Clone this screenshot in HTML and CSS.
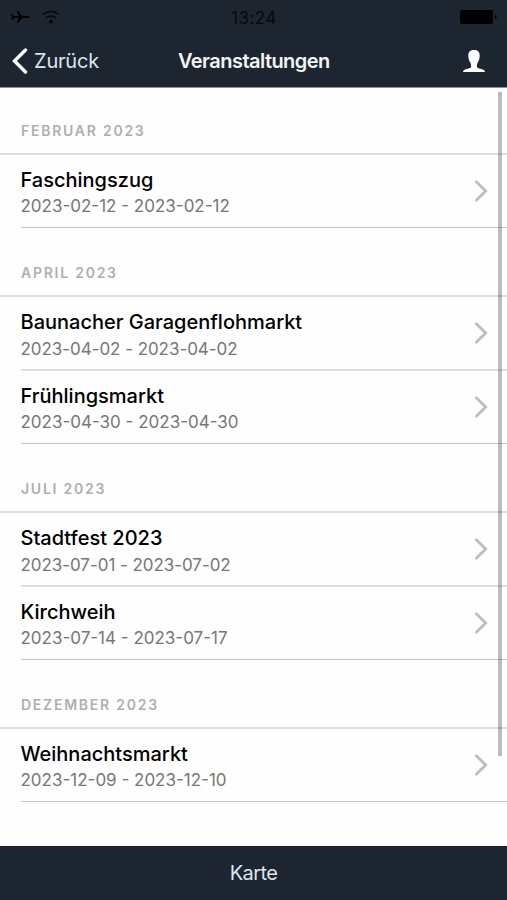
FILE: index.html
```html
<!DOCTYPE html>
<html lang="de">
<head>
    <meta charset="utf-8">
    <title>Veranstaltungen</title>
    <link rel="stylesheet" href="styles.css">
</head>
<body>

    <header class="header">
        <div class="status">
            <div class="status-left">
                <svg width="20" height="16" viewBox="0 0 20 16"><path d="M19.500 8c0-.8-1-1.100-2.300-1.100h-5L8.200 2H6.800l2 4.900H4.300L2.300 5.200H1L2.200 8 1 10.800h1.300l2-1.700h4.500l-2 4.900h1.400l4-4.900h5c1.300 0 2.300-.3 2.300-1.100z"/></svg>
                <svg width="18" height="14" viewBox="0 0 18 14" fill="none" stroke="#050608" stroke-width="1.500"><path d="M1 4.500Q9-1.500 17 4.500M4 8Q9 4 14 8"/><circle cx="9" cy="11.500" r="1.200" fill="#000"/></svg>
            </div>
            <span class="time">13:24</span>
            <div class="status-right">
                <svg width="38" height="14" viewBox="0 0 38 14"><rect width="33" height="14" rx="2"/><path d="M35 4.500q3.500 2.500 0 5z"/></svg>
            </div>
        </div>
        <div class="nav">
            <a class="back">
                <svg width="16" height="26" viewBox="0 0 16 26" fill="none" stroke="#fff" stroke-width="3.400" stroke-linecap="round"><path d="M13.500 2 2.500 13 13.500 24"/></svg>
                <span>Zurück</span>
            </a>
            <h1>Veranstaltungen</h1>
            <a class="profile">
                <svg width="22" height="22" viewBox="0 0 22 22" fill="#fff"><path d="M11 0C7.200 0 5.200 2 5.300 5.800c.1 3.200.8 5.200 2.100 7 .7 1.100.9 3.600.5 4.500C7 19.200 0 18.700 0 22h22c0-3.300-7-2.800-7.900-4.700-.4-.9-.2-3.400.5-4.500 1.300-1.800 2-3.800 2.100-7C16.800 2 14.800 0 11 0z"/></svg>
            </a>
        </div>
    </header>

    <main class="list">
        <h2>Februar 2023</h2>
        <a class="event last">
            <div class="text">
                <span class="title">Faschingszug</span>
                <span class="date">2023-02-12 - 2023-02-12</span>
            </div>
            <svg class="arrow" viewBox="0 0 14 22"><path d="M1.500 1 11.700 11 1.500 21"/></svg>
        </a>

        <h2>April 2023</h2>
        <a class="event">
            <div class="text">
                <span class="title">Baunacher Garagenflohmarkt</span>
                <span class="date">2023-04-02 - 2023-04-02</span>
            </div>
            <svg class="arrow" viewBox="0 0 14 22"><path d="M1.500 1 11.700 11 1.500 21"/></svg>
        </a>
        <a class="event last">
            <div class="text">
                <span class="title">Frühlingsmarkt</span>
                <span class="date">2023-04-30 - 2023-04-30</span>
            </div>
            <svg class="arrow" viewBox="0 0 14 22"><path d="M1.500 1 11.700 11 1.500 21"/></svg>
        </a>

        <h2>Juli 2023</h2>
        <a class="event">
            <div class="text">
                <span class="title">Stadtfest 2023</span>
                <span class="date">2023-07-01 - 2023-07-02</span>
            </div>
            <svg class="arrow" viewBox="0 0 14 22"><path d="M1.500 1 11.700 11 1.500 21"/></svg>
        </a>
        <a class="event last">
            <div class="text">
                <span class="title">Kirchweih</span>
                <span class="date">2023-07-14 - 2023-07-17</span>
            </div>
            <svg class="arrow" viewBox="0 0 14 22"><path d="M1.500 1 11.700 11 1.500 21"/></svg>
        </a>

        <h2>Dezember 2023</h2>
        <a class="event last">
            <div class="text">
                <span class="title">Weihnachtsmarkt</span>
                <span class="date">2023-12-09 - 2023-12-10</span>
            </div>
            <svg class="arrow" viewBox="0 0 14 22"><path d="M1.500 1 11.700 11 1.500 21"/></svg>
        </a>
        <div class="scrollbar"></div>
    </main>

    <footer class="footer">Karte</footer>

</body>
</html>
```

FILE: styles.css
```css
* {
    box-sizing: border-box;
}

body {
    margin: 0;
    height: 900px;
    display: flex;
    flex-direction: column;
    overflow: hidden;
    background-color: #fefefe;
    font-family: Inter, sans-serif;
    color: #000;
}

svg {
    display: block;
}

/* 헤더 */
.header {
    height: 88px;
    background-color: #1c2530;
    border-bottom: 1px solid #8b9198;
}

.status {
    height: 34px;
    padding: 0 9px 0 10px;
    display: grid;
    grid-template-columns: 1fr auto 1fr;
    align-items: center;
}

.status-left {
    display: flex;
    align-items: center;
    gap: 12px;
}

.status-right {
    display: flex;
    justify-content: flex-end;
}

.time {
    font-size: 17px;
    letter-spacing: 0.5px;
    padding-top: 2px;
    color: #07090c;
}

.nav {
    height: 53px;
    padding: 0 22px 0 12px;
    display: grid;
    grid-template-columns: 166px auto 1fr;
    align-items: center;
    color: #f4f6fa;
}

.back {
    display: flex;
    align-items: center;
    gap: 6px;
    font-size: 20px;
    letter-spacing: -0.2px;
    color: #dfe5ec;
}

h1 {
    margin: 0;
    font-size: 20px;
    font-weight: 600;
    letter-spacing: -0.55px;
}

.profile {
    justify-self: end;
}

/* 목록 */
.list {
    position: relative;
    flex: 1;
}

h2 {
    margin: 0;
    height: 69px;
    padding: 35px 0 0 21px;
    border-bottom: 2px solid #dedede;
    font-size: 14px;
    line-height: 20px;
    font-weight: 600;
    letter-spacing: 1.75px;
    text-transform: uppercase;
    color: #afafaf;
}

h2:first-child {
    height: 67px;
    padding-top: 33px;
}

.event {
    height: 74px;
    margin-left: 20.5px;
    padding-right: 19px;
    display: flex;
    justify-content: space-between;
    align-items: center;
    border-bottom: 2px solid #dedede;
}

.event.last {
    height: 73px;
    border-bottom: 1px solid #c4c4c4;
}

.text {
    align-self: flex-start;
    padding-top: 12px;
    display: flex;
    flex-direction: column;
}

.title {
    font-size: 20px;
    line-height: 26px;
    font-weight: 500;
}

.date {
    font-size: 17px;
    line-height: 26px;
    color: #777;
}

.event:not(.last) .date {
    line-height: 28px;
    letter-spacing: -0.05px;
}

.arrow {
    width: 14px;
    height: 22px;
    fill: none;
    stroke: #bdbdbd;
    stroke-width: 2.8;
}

.scrollbar {
    position: absolute;
    top: 4px;
    right: 5px;
    width: 4px;
    height: 664px;
    background-color: rgba(0, 0, 0, 0.26);
}

/* 하단 바 */
.footer {
    height: 54px;
    background-color: #1c2530;
    color: #dfe5ec;
    font-size: 20px;
    line-height: 55px;
    letter-spacing: -0.6px;
    text-align: center;
}
```
